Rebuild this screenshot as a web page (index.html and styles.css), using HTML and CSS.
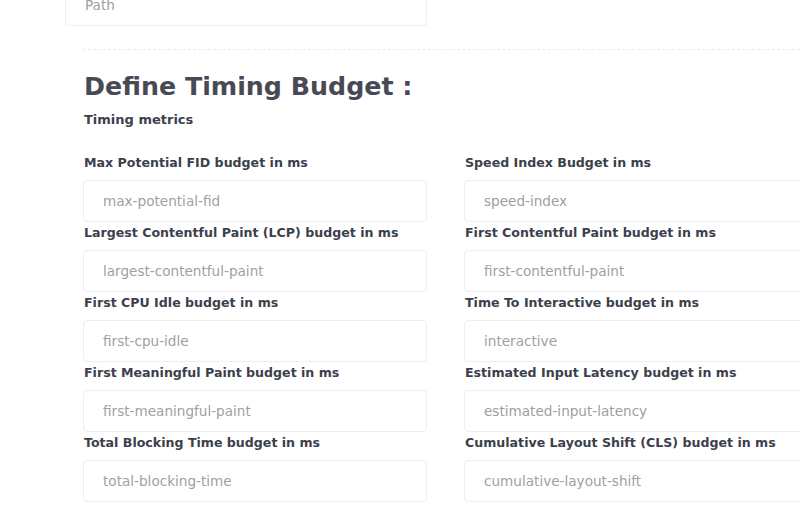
FILE: index.html
```html
<!DOCTYPE html>
<html lang="en">
<head>
<meta charset="utf-8">
<title>Define Timing Budget</title>
<link rel="stylesheet" href="styles.css">
</head>
<body>
<div class="page">
  <div class="path-row">
    <input class="input path-input" type="text" placeholder="Path">
  </div>
  <div class="separator"></div>
  <section class="section">
    <h2 class="title">Define Timing Budget :</h2>
    <div class="subtitle">Timing metrics</div>
    <div class="grid">
      <div class="field">
        <label class="label">Max Potential FID budget in ms</label>
        <input class="input" type="text" placeholder="max-potential-fid">
      </div>
      <div class="field">
        <label class="label">Speed Index Budget in ms</label>
        <input class="input" type="text" placeholder="speed-index">
      </div>
      <div class="field">
        <label class="label">Largest Contentful Paint (LCP) budget in ms</label>
        <input class="input" type="text" placeholder="largest-contentful-paint">
      </div>
      <div class="field">
        <label class="label">First Contentful Paint budget in ms</label>
        <input class="input" type="text" placeholder="first-contentful-paint">
      </div>
      <div class="field">
        <label class="label">First CPU Idle budget in ms</label>
        <input class="input" type="text" placeholder="first-cpu-idle">
      </div>
      <div class="field">
        <label class="label">Time To Interactive budget in ms</label>
        <input class="input" type="text" placeholder="interactive">
      </div>
      <div class="field">
        <label class="label">First Meaningful Paint budget in ms</label>
        <input class="input" type="text" placeholder="first-meaningful-paint">
      </div>
      <div class="field">
        <label class="label">Estimated Input Latency budget in ms</label>
        <input class="input" type="text" placeholder="estimated-input-latency">
      </div>
      <div class="field">
        <label class="label">Total Blocking Time budget in ms</label>
        <input class="input" type="text" placeholder="total-blocking-time">
      </div>
      <div class="field">
        <label class="label">Cumulative Layout Shift (CLS) budget in ms</label>
        <input class="input" type="text" placeholder="cumulative-layout-shift">
      </div>
    </div>
  </section>
</div>
</body>
</html>
```

FILE: styles.css
```css
html, body {
  margin: 0;
  padding: 0;
  background: #ffffff;
  overflow: hidden;
}

body {
  font-family: "DejaVu Sans", "Liberation Sans", sans-serif;
  width: 800px;
  height: 530px;
}

.page {
  margin-top: -16px;
  width: 840px;
}

.path-row {
  padding-left: 65px;
}

.input {
  display: block;
  box-sizing: border-box;
  height: 42px;
  margin: 0;
  padding: 0 19px;
  border: 1px solid #eceef3;
  border-radius: 4px;
  background: #ffffff;
  font-family: "DejaVu Sans", "Liberation Sans", sans-serif;
  font-size: 13.6px;
  color: #3f4254;
  outline: none;
}

.input::placeholder {
  color: #a0a0a0;
  opacity: 1;
}

.path-input {
  width: 362px;
}

.separator {
  margin: 23px 0 0 83px;
  border-top: 1px dashed #e9eaef;
}

.section {
  padding-left: 83px;
}

.title {
  margin: 22px 0 0 1px;
  font-size: 25.3px;
  line-height: 30px;
  font-weight: 700;
  color: #474a55;
}

.subtitle {
  margin: 10px 0 0 1px;
  font-size: 13px;
  line-height: 16px;
  font-weight: 700;
  color: #3c3f4c;
}

.grid {
  margin-top: 27px;
  display: grid;
  grid-template-columns: 344px 344px;
  column-gap: 37px;
  row-gap: 3px;
}

.field {
  display: flex;
  flex-direction: column;
}

.label {
  display: block;
  margin: 0 0 9px 1px;
  font-size: 12.6px;
  line-height: 16px;
  font-weight: 700;
  color: #3c3f4c;
  white-space: nowrap;
}

.field .input {
  width: 344px;
}
```
